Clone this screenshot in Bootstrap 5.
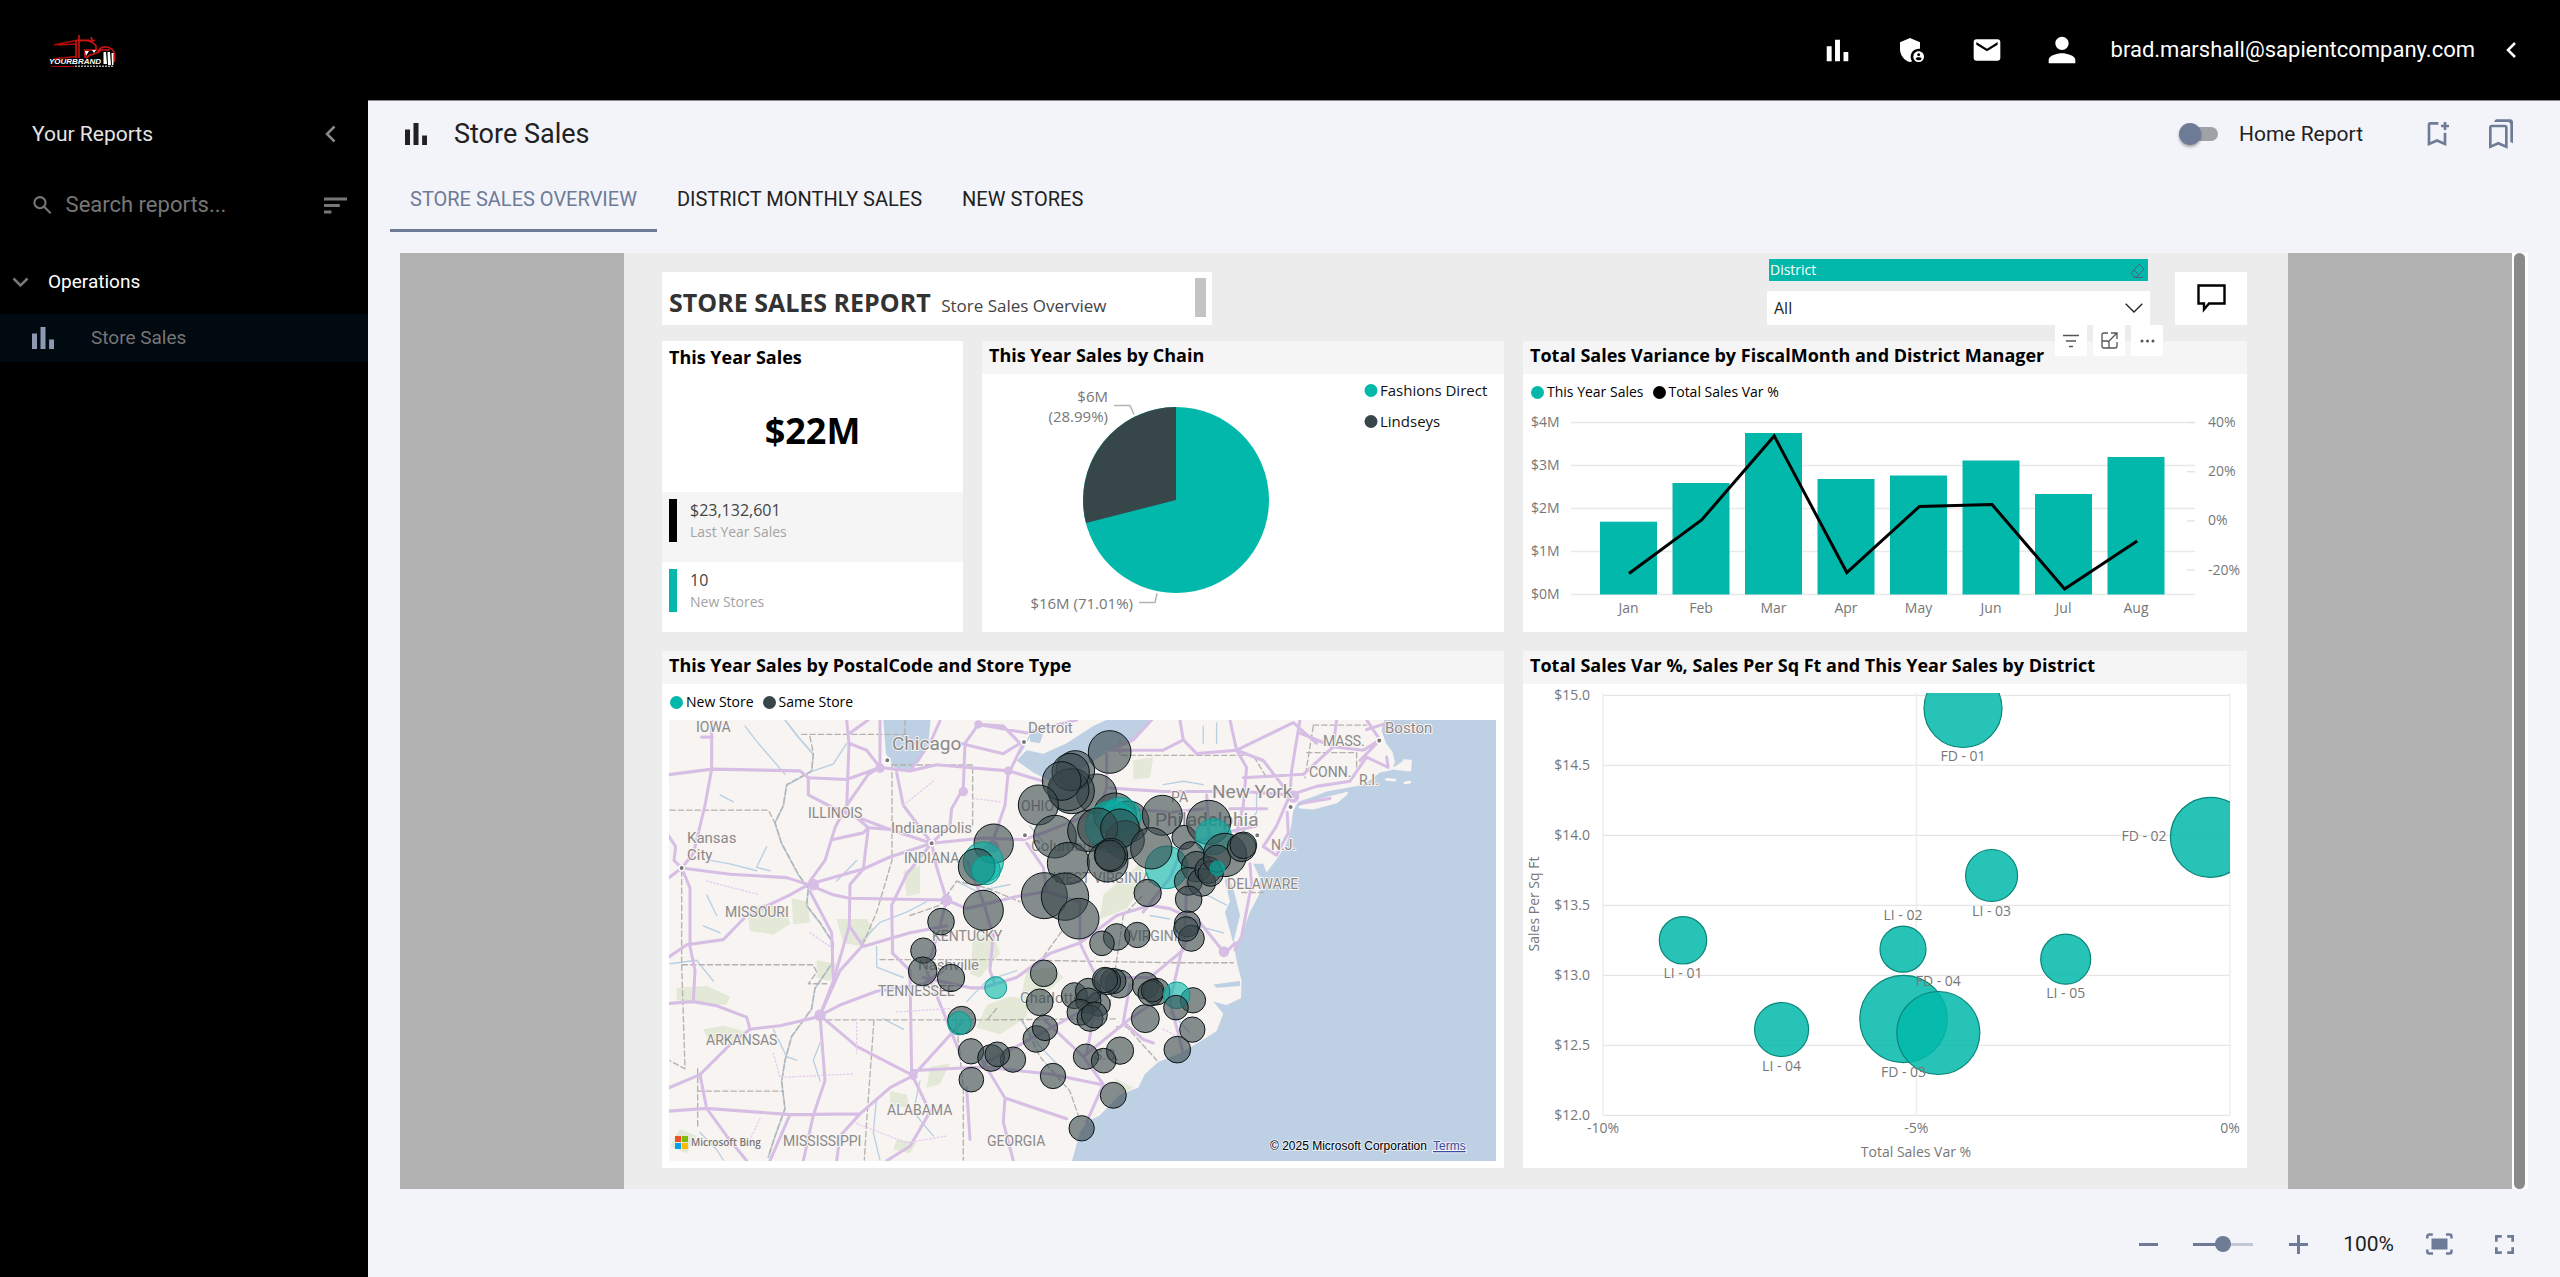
<!DOCTYPE html>
<html lang="en">
<head>
<meta charset="utf-8">
<meta name="viewport" content="width=device-width, initial-scale=1">
<title>Store Sales</title>
<link href="https://cdn.jsdelivr.net/npm/bootstrap@5.3.0/dist/css/bootstrap.min.css" rel="stylesheet">
<style>
:root{--teal:#01b8aa;--slate:#374649;--accent:#6d7b97}
body{font-family:Roboto,sans-serif;font-size:21px;line-height:28px;background:#f3f4fa;color:#212121}
.app-root{min-height:100vh}
.top-bar{height:100px;background:#000;color:#fff;padding:0 31px 0 48px}
.plain-btn{background:none;border:0;padding:0;color:inherit;display:inline-flex;align-items:center;justify-content:center}
.top-btn{width:75px;height:75px}
.user-name{color:#fff;text-decoration:none;font-size:22px;margin:0 18px 0 11px}
.side-nav{width:368px;background:#000;color:#e4e4e4}
.side-head{height:67px;padding:0 32px}
.side-search{height:66px;margin-top:5px;padding:0 21px 0 33px;color:#767676}
.side-search input{background:none;border:0;color:#767676;min-width:0;padding:0 0 0 14px;outline:0;font-size:22px}
.side-search input::placeholder{color:#767676;opacity:1}
.side-group{height:64px;margin-top:12px;padding-left:12px;font-size:19px;color:#fff;gap:19px;text-align:left}
.side-item{height:48px;background:#010911;color:#767676;font-size:19px;text-decoration:none;padding-left:32px;gap:37px}
.main-col{border-top:1px solid #8b8b8b;min-width:0}
.title-row{height:66px;padding:0 43px 0 37px}
.page-title{font-size:27px;font-weight:400;margin:0 0 0 27px}
.home-switch{padding:0;min-height:0;gap:21px}
.home-switch .form-check-input{float:none;appearance:none;margin:0;width:32px;height:14px;border:0;border-radius:7px;background:#a1a2a5;position:relative}
.home-switch .form-check-input::before{content:"";position:absolute;left:-7px;top:-4px;width:22px;height:22px;border-radius:50%;background:var(--accent);box-shadow:0 2px 3px #0005}
.view-tabs{height:65px;margin-bottom:21px;padding-left:22px}
.view-tabs .nav-link{color:#212121;font-size:20px;line-height:28px;padding:18px 20px 16px;border-bottom:3px solid transparent;text-transform:uppercase}
.view-tabs .nav-link.active{color:var(--accent);border-color:var(--accent)}
.stage-row{padding:0 32px;min-height:936px}
.stage{background:#b2b2b2}
.scroll-rail{width:16px;background:#fff;padding:0 3px 0 2px}
.scroll-knob{background:#8a8a8a;border-radius:6px}
.report-page{background:#ececec;aspect-ratio:16/9;height:936px;padding:0 41px 21px 38px;font-family:"Open Sans","Noto Sans",sans-serif;color:#000}
.report-top{height:88px}
.report-title{margin-top:19px;height:53px;width:550px;background:#fff;padding:6px 6px 8px 7px;color:#333}
.report-title h2{font-size:25px;line-height:34px;font-weight:700;margin:0;padding-top:7px}
.report-title h2 span{font-size:17px;font-weight:400;color:#444;margin-left:4px}
.title-scroll{width:11px;background:#c4c4c4}
.slicer{width:383px;margin:6px 25px 0 auto}
.slicer-label{background:var(--teal);color:#fff;font-size:14px;line-height:22px;margin:0 2px 10px;padding:0 3px 0 1px}
.slicer select{height:34px;background-color:#fff;border:0;border-radius:0;font-size:16px;line-height:22px;padding:6px 40px 6px 7px;color:#222;background-size:18px 10px;background-position:right 7px center;background-image:url("data:image/svg+xml,%3Csvg xmlns='http://www.w3.org/2000/svg' viewBox='0 0 18 10'%3E%3Cpath d='M.7.7 9 9 17.300.7' fill='none' stroke='%23222' stroke-width='1.300'/%3E%3C/svg%3E")}
.comment-btn{width:72px;height:53px;margin-top:19px;background:#fff}
.report-grid{display:grid;grid-template-columns:301fr 522fr 724fr;grid-template-rows:291fr 517fr;gap:19px;min-height:0}
.tile{background:#fff;min-width:0;min-height:0;position:relative}
.tile-title{background:#f5f5f5;font-size:18px;line-height:24px;font-weight:700;margin:0;padding:2px 7px 7px;white-space:nowrap;flex:none}
.wide-tile{grid-column:span 2}
.tile svg.plot{display:block;width:100%;flex:1 1 0;min-height:0}
.plot text{fill:#777;font-size:14px}
.plot .lab{font-size:15px}
.keys{font-size:14px;line-height:20px;gap:9px}
.keys i{display:inline-block;width:13px;height:13px;border-radius:50%;vertical-align:-2px;margin-right:3px}
.kpi-row{height:70px;padding:7px;gap:13px}
.kpi-row .swatch{width:8px;height:43px}
.kpi-row b{display:block;font-size:16px;line-height:23px;font-weight:400;color:#444}
.kpi-row small{display:block;font-size:14px;line-height:20px;color:#a3a3a3}
.kpi-big{font-size:36px;font-weight:700;line-height:48px;padding-bottom:6px}
.hover-tools{position:absolute;top:-16px;right:84px;gap:6px}
.hover-tools button{width:32px;height:31px;background:#fff;color:#555}
.map-box text{font-family:Roboto,sans-serif;fill:#8b8989;font-size:14px;paint-order:stroke;stroke:#f7f4f2;stroke-width:2px}
.map-box .m15{font-size:15px}.map-box .m19{font-size:19px}
.map-box .cap{font-family:"Liberation Sans",sans-serif;font-size:12px;fill:#000;stroke:#ffffff99}
.map-box a text.cap{fill:#3a4ea0;text-decoration:underline}
.map-box .bing{font-family:"Open Sans",sans-serif;font-size:10px;font-weight:600;fill:#777}
.foot-bar{height:88px;padding:22px 36px 0 0;gap:25px;color:var(--accent)}
.foot-bar button{width:40px;height:40px}
.foot-bar output{color:#212121}
.zoom-range{width:60px;height:16px;appearance:none;background:linear-gradient(90deg,#6d7b97 50%,#c3c8d5 50%) center/100% 3px no-repeat;margin:0;padding:0}
.zoom-range::-webkit-slider-thumb{appearance:none;width:16px;height:16px;border-radius:50%;background:var(--accent)}
</style>
</head>
<body>
<div class="app-root d-flex flex-column">
<header class="top-bar d-flex align-items-center">
  <a href="#" class="me-auto d-flex" aria-label="Home">
    <svg width="68" height="34" viewBox="0 0 68 34">
      <path d="M6 12 30 7 47 7.500M5 26 28 23.500M10 12l18-1" fill="none" stroke="#b00c08" stroke-width="1.400"/>
      <path d="M28 7.500V25M31 2v23M43 4l2 5M31 8q12-2 17 5v4H37v8M38 25l4-3 7-2q3-7 10-6 6 1 7.500 7v8M50 20l3-3h9" fill="none" stroke="#d01510" stroke-width="1.600"/>
      <path d="M37 18h4l-3 5zM44 17h4l-2 3zM55.500 19h2.500l1 12h-3.500zM59.500 19h2.500l1 13h-3zM63.500 20h2v12H64z" fill="#fff"/>
      <text x="1" y="31" font-family="Liberation Sans" font-size="8" font-weight="700" font-style="italic" fill="#fff">YOURBRAND</text>
      <path d="M3 33h23v1H3z" fill="#b00"/><path d="M27 33.300h38" stroke="#aaa" stroke-width="1.400" stroke-dasharray="2 1"/>
    </svg>
  </a>
  <button class="plain-btn top-btn" aria-label="Reports"><svg width="37" height="37" viewBox="0 0 24 24" fill="currentColor"><path d="M5 9.200h3.200V19H5zM10.400 5h3.200v14h-3.200zM15.900 13H19v6h-3.100z"/></svg></button>
  <button class="plain-btn top-btn" aria-label="Admin"><svg width="32" height="32" viewBox="0 0 24 24" fill="currentColor"><path d="M17 11c.34 0 .67.040 1 .090V6.270L10.500 3 3 6.270v4.910c0 4.540 3.200 8.790 7.500 9.820.55-.13 1.080-.32 1.600-.55-.69-.98-1.100-2.170-1.100-3.450 0-3.310 2.690-6 6-6z"/><path d="M17 13c-2.210 0-4 1.790-4 4s1.790 4 4 4 4-1.790 4-4-1.790-4-4-4zm0 1.380c.62 0 1.120.51 1.120 1.120s-.51 1.120-1.120 1.120-1.120-.51-1.120-1.120.5-1.120 1.120-1.120zm0 5.370c-.93 0-1.740-.46-2.240-1.170.05-.72 1.510-1.080 2.240-1.080s2.190.36 2.240 1.080c-.5.710-1.310 1.170-2.240 1.170z"/></svg></button>
  <button class="plain-btn top-btn" aria-label="Mail"><svg width="32" height="32" viewBox="0 0 24 24" fill="currentColor"><path d="M20 4H4c-1.100 0-2 .9-2 2v12c0 1.100.9 2 2 2h16c1.100 0 2-.9 2-2V6c0-1.100-.9-2-2-2zm0 4-8 5-8-5V6l8 5 8-5v2z"/></svg></button>
  <button class="plain-btn top-btn" aria-label="Account"><svg width="40" height="40" viewBox="0 0 24 24" fill="currentColor"><path d="M12 12c2.210 0 4-1.790 4-4s-1.790-4-4-4-4 1.790-4 4 1.790 4 4 4zm0 2c-2.670 0-8 1.340-8 4v2h16v-2c0-2.660-5.330-4-8-4z"/></svg></button>
  <a href="#" class="user-name">brad.marshall@sapientcompany.com</a>
  <button class="plain-btn" aria-label="Collapse header"><svg width="36" height="24" viewBox="0 0 36 24" fill="none" stroke="currentColor" stroke-width="2.500"><path d="M22 5l-7 7 7 7"/></svg></button>
</header>
<div class="d-flex flex-fill">
  <nav class="side-nav flex-shrink-0">
    <div class="side-head d-flex align-items-center justify-content-between"><span>Your Reports</span>
      <button class="plain-btn" style="color:#888" aria-label="Collapse"><svg width="11" height="18" viewBox="0 0 11 18" fill="none" stroke="currentColor" stroke-width="2.500"><path d="M9.500 1.500 2 9l7.500 7.500"/></svg></button></div>
    <label class="side-search d-flex align-items-center">
      <svg width="20" height="20" viewBox="0 0 20 20" fill="none" stroke="currentColor" stroke-width="2.300"><circle cx="7.500" cy="7.500" r="6"/><path d="m12 12 7 7"/></svg>
      <input type="text" class="flex-fill" placeholder="Search reports..." aria-label="Search reports">
      <svg width="25" height="17" viewBox="0 0 25 17" fill="currentColor"><path d="M0 0h25v3H0zM0 7h17v3H0zM0 14h8v3H0z"/></svg>
    </label>
    <button class="plain-btn side-group w-100 justify-content-start"><svg width="17" height="11" viewBox="0 0 17 11" fill="none" stroke="#777" stroke-width="2.500"><path d="m1.500 1.500 7 7 7-7"/></svg>Operations</button>
    <a href="#" class="side-item d-flex align-items-center"><svg width="22" height="22" viewBox="0 0 14 14" fill="#8d99b3"><path d="M0 4.200h3.200V14H0zM5.400 0h3.200v14H5.400zM10.900 8H14v6h-3.100z"/></svg>Store Sales</a>
  </nav>
  <main class="main-col flex-fill d-flex flex-column">
    <div class="title-row d-flex align-items-center">
      <svg width="22" height="22" viewBox="0 0 14 14" fill="#212121"><path d="M0 4.200h3.200V14H0zM5.400 0h3.200v14H5.400zM10.900 8H14v6h-3.100z"/></svg>
      <h1 class="page-title me-auto">Store Sales</h1>
      <div class="form-check form-switch home-switch d-flex align-items-center mb-0"><input class="form-check-input" type="checkbox" role="switch" id="homeRep"><label for="homeRep">Home Report</label></div>
      <button class="plain-btn" style="margin-left:58px;color:#6d7b97" aria-label="Add bookmark"><svg width="32" height="32" viewBox="0 0 24 24" fill="currentColor"><path d="M17 11v6.970l-5-2.140-5 2.140V5h6V3H7a2 2 0 0 0-2 2v16l7-3 7 3V11zm4-4h-2v2h-2V7h-2V5h2V3h2v2h2z"/></svg></button>
      <button class="plain-btn" style="margin-left:32px;color:#6d7b97" aria-label="Bookmarks"><svg width="32" height="32" viewBox="0 0 24 24" fill="currentColor"><path d="M15 7v12.970l-4.210-1.810-.79-.34-.79.34L5 19.970V7zm4-6H8.990C7.890 1 7 1.900 7 3h10c1.100 0 2 .9 2 2v13l2 1V3c0-1.100-.9-2-2-2zm-4 4H5c-1.100 0-2 .9-2 2v16l7-3 7 3V7c0-1.100-.9-2-2-2z"/></svg></button>
    </div>
    <ul class="nav view-tabs flex-nowrap">
      <li class="nav-item"><a class="nav-link active" href="#">Store Sales Overview</a></li>
      <li class="nav-item"><a class="nav-link" href="#">District Monthly Sales</a></li>
      <li class="nav-item"><a class="nav-link" href="#">New Stores</a></li>
    </ul>
    <div class="stage-row flex-fill d-flex">
      <div class="stage flex-fill d-flex justify-content-center">
        <div class="report-page d-flex flex-column">
          <div class="report-top d-flex align-items-start">
            <div class="report-title d-flex justify-content-between"><h2>STORE SALES REPORT <span>Store Sales Overview</span></h2><div class="title-scroll"></div></div>
            <div class="slicer">
              <label for="district" class="slicer-label d-flex justify-content-between align-items-center">District
                <svg width="15" height="15" viewBox="0 0 15 15" fill="none" stroke="#467" stroke-width="1"><path d="M9 1l5 5-7 8H4L1 10.500zM4 7l5 5M4 14.500h9"/></svg></label>
              <select id="district" class="form-select"><option>All</option></select>
            </div>
            <button class="plain-btn comment-btn" aria-label="Comments"><svg width="29" height="29" viewBox="0 0 29 29" fill="none" stroke="#000" stroke-width="2.400"><path d="M1.500 1.500h26v18H12l-5 6v-6H1.500z"/></svg></button>
          </div>
          <div class="report-grid flex-fill">
            <section class="tile d-flex flex-column">
              <h3 class="tile-title bg-white pt-1">This Year Sales</h3>
              <div class="kpi-big flex-fill d-flex align-items-center justify-content-center">$22M</div>
              <div class="kpi-row d-flex" style="background:#f5f5f5"><div class="swatch" style="background:#000"></div><div><b>$23,132,601</b><small>Last Year Sales</small></div></div>
              <div class="kpi-row d-flex"><div class="swatch" style="background:#01b8aa"></div><div><b>10</b><small>New Stores</small></div></div>
            </section>
            <section class="tile d-flex flex-column">
              <h3 class="tile-title">This Year Sales by Chain</h3>
              <svg class="plot" viewBox="982 374 522 258">
                <circle cx="1176" cy="500" r="93" fill="#01b8aa"/>
                <path d="M1176 500V407A93 93 0 0 0 1086 523z" fill="#374649"/>
                <path d="M1114 405.500h16l4 9M1139 602.500h16l2-9" fill="none" stroke="#b3b3b3" stroke-width="1.500"/>
                <text class="lab" x="1108" y="402" text-anchor="end">$6M</text><text class="lab" x="1108" y="422" text-anchor="end">(28.99%)</text>
                <text class="lab" x="1133" y="609" text-anchor="end">$16M (71.01%)</text>
                <circle cx="1371" cy="390.500" r="6.500" fill="#01b8aa"/><circle cx="1371" cy="421.500" r="6.500" fill="#374649"/>
                <text class="lab" x="1380" y="396" style="fill:#111">Fashions Direct</text><text class="lab" x="1380" y="427" style="fill:#111">Lindseys</text>
              </svg>
            </section>
            <section class="tile d-flex flex-column">
              <h3 class="tile-title">Total Sales Variance by FiscalMonth and District Manager</h3>
              <div class="hover-tools d-flex">
                <button class="plain-btn" aria-label="Filters"><svg width="16" height="14" viewBox="0 0 16 14" stroke="currentColor" stroke-width="1.300"><path d="M0 1.500h16M3 7h10M6 12.500h4"/></svg></button>
                <button class="plain-btn" aria-label="Focus mode"><svg width="17" height="17" viewBox="0 0 17 17" fill="none" stroke="currentColor" stroke-width="1.300"><path d="M7 1H3a2 2 0 0 0-2 2v11a2 2 0 0 0 2 2h11a2 2 0 0 0 2-2v-4M1 9h5a2 2 0 0 1 2 2v5M10 1h6v6M16 1 8 9"/></svg></button>
                <button class="plain-btn" aria-label="More"><svg width="15" height="4" viewBox="0 0 15 4" fill="currentColor"><circle cx="2" cy="2" r="1.500"/><circle cx="7.500" cy="2" r="1.500"/><circle cx="13" cy="2" r="1.500"/></svg></button>
              </div>
              <div class="keys d-flex px-2 pt-2"><span><i style="background:#01b8aa"></i>This Year Sales</span><span><i style="background:#000"></i>Total Sales Var %</span></div>
              <svg class="plot" id="barPlot" viewBox="1523 402 724 230"></svg>
            </section>
            <section class="tile wide-tile d-flex flex-column">
              <h3 class="tile-title">This Year Sales by PostalCode and Store Type</h3>
              <div class="keys d-flex px-2 pt-2 pb-2"><span><i style="background:#01b8aa"></i>New Store</span><span><i style="background:#374649"></i>Same Store</span></div>
              <div class="map-box flex-fill d-flex" style="padding:0 8px 7px 7px;min-height:0">
              <svg class="plot" viewBox="669 720 827 441" preserveAspectRatio="none">
                <rect x="669" y="720" width="827" height="441" fill="#f7f4f1"/>
                <g transform="translate(650 640) scale(.3333 .3444)" stroke-linejoin="round" stroke-linecap="round" fill="none">
                  <g fill="#e3e9d6"><path d="M290 780l60-15 60 20 10 40-50 30-70-10zM425 750l50 10 5 60-50 5zM560 810h90l20 30-30 50-60-10zM80 1010l90-5 70 30-10 25-90-5-60-10zM160 1130l60-10 60 15-10 30-90 5zM1010 1060l70-25 60 10-10 50-80 50-70-20zM1130 960l80-10 30 30-70 60-60 10zM970 860l60-10 20 60-60 70-30-10zM760 670l50-15v80l-40 10zM840 1240l60-10-30 60-40 10zM720 1310l50 10 10 40-60-10zM1360 740l110-90 20 40-60 90-80 30zM1450 350l60-10-10 60-50 5zM500 930l60 10-20 50-40-10zM90 1420l50 20-30 50-50-20zM1390 1270l60 30-30 15zM740 1450l60 10-20 30-50-10z"/></g>
                  <g fill="#bed0e4"><path d="M700 232H842L835 300 810 350 780 380 735 372 708 330zM1100 350 1130 320 1180 330 1250 300 1330 250 1370 232H1505L1450 290 1380 320 1300 370 1200 410 1150 385zM1140 265l40 5-10 30-30-5z"/>
                  <path d="M2203 232 2195 262 2208 300 2228 325 2235 355 2225 378 2190 385 2170 400 2140 420 2090 430 2030 440 1990 455 1945 470 1930 495 1922 550 1910 590 1885 630 1850 675 1840 650 1810 650 1805 640 1830 690V735L1800 790 1770 870 1750 880 1762 940 1775 990 1773 1040 1730 1060 1690 1050 1720 1085 1700 1135 1660 1160 1625 1180 1590 1200 1525 1225 1485 1260 1465 1300 1410 1320 1350 1380 1310 1400 1290 1430 1270 1500 1265 1514H2540V232zM1725 700l15 60-15 30 25 90 20-80-15-60-20-60zM1650 760l80 70M1690 1000l80-10v15l-70 5z"/></g>
                  <path d="M2228 372 2280 378 2282 352 2262 350M1950 485 2020 462 2090 445 2060 470 1990 488zM2210 405l25 2M2265 415l15-2" stroke="#f7f4f1" stroke-width="8" fill="#f7f4f1"/>
                  <g stroke="#b9d0e4" stroke-width="4"><path d="M405 232l40 50 45 50-5 50-75 40-10 60-25 50 20 60 50 90 30 40-5 50 40 50 40 60-5 60-50 70-10 60-60 80-20 70-10 60 10 80-30 80-20 60" stroke-width="5"/><path d="M285 250l40 50 80 90M590 300l-40 60-60 20M210 450l40 20M170 740l30 60M160 830l50 20M350 600l-30 60 40 10M60 940l80-10 50 60M180 640l60 10 80 20M560 700l60-60M630 880l60-60 80-30 60-30M680 890v60l80 30M920 700l60 30 100-20M1190 600l-50-60M370 1130l40 80 30 10M510 1170l-20 50 20 60M700 1100l60 30M680 1330l-10 100 20 80M810 1280l-20 90 60 70M1110 1100l60 80 60 60M1150 260l-40 70M150 1430l50 50 20 30M950 1050l60-60 90-30M1660 250v50M1700 240v60M1670 740l60 30M1640 830l80 20M1500 800l60 10M1560 1080l60 60M1540 420l60-10 60 10M1820 440v60l-50 70"/></g>
                  <path d="M60 494H355L380 540M95 670V943H490L500 965 475 998H530M726 360V640L680 790 640 880M726 363H968V540M455 274H770M765 232V274M690 928H1040L1560 937H1750M530 1103H1010L1400 1100M1400 1123H1430L1520 1220M95 943 105 1245 60 1222M143 1245V1415M143 1310H400M672 1103 650 1400 643 1510M918 1103 940 1300V1510M1115 1100 1170 1210 1260 1310 1285 1380M1380 1060 1420 800 1480 740M1415 335H1810L1850 400M1990 247H2150M1970 327H2120V380M1990 250 1965 400M1775 733H1840M1410 290V330M1040 1070 1010 1105M780 800l90-30 50-70 90 20 100 40M1100 980l80-60 60-80M480 280l10 50-5 50-75 40-10 60-25 50 20 60 50 90 30 40-5 50 40 50 40 60-5 60-50 70-10 60-60 80-20 70-10 60 10 80-30 80-20 60" stroke="#b5b2ae" stroke-width="4" stroke-dasharray="16 9"/>
                  <g stroke="#d7bee5" stroke-width="9">
                  <path d="M57 391 185 375 450 380 475 400 590 405 690 370 780 380 860 362 1075 380 1180 410"/><path d="M185 232V375L165 480 130 620 95 662 57 690M155 282H187"/><path d="M57 570l20 30-5 40 23 22L240 680 410 690 475 710 640 665 720 630 845 590 1000 575 1120 580 1180 560 1360 490"/><path d="M690 370 655 390 590 480 555 545 525 640 480 700 490 710M590 232 597 300 590 490 655 545 640 665 600 710 598 830 550 990 510 1090M597 300 650 320 690 370M690 232V370M600 270 655 232"/><path d="M475 400V450L555 490 720 550 845 590M740 385 760 480 845 590M845 590 770 680 725 770 728 910M845 590 860 660 890 755 950 780 1100 745 1190 730"/><path d="M545 580 640 560 655 545 720 550M845 590 900 540 905 490 940 430 945 300 985 245 1060 250 1110 300M870 235 840 300 780 380M1075 380 1065 480 1030 580 1000 610M1120 300 1080 380M1110 300 1060 330 930 300M985 245 1130 270 1280 232"/><path d="M475 710 420 740 290 800 220 870 110 885 57 920M95 662 120 720V890L135 960 130 1050 57 1055M130 1050 200 1062 290 1095 300 1130 390 1120 500 1095"/><path d="M300 1130 235 1180 150 1262 57 1300M150 1262 170 1360 230 1440 290 1512M57 1368 170 1360 420 1378 630 1376 720 1300 790 1265M510 1090 525 1280 490 1380 460 1512M420 1378 360 1512M630 1376 570 1440 560 1512M510 1090 620 1180 790 1265M510 1090 570 1060 680 1020 820 1000 880 960"/><path d="M475 710 550 740 598 750 890 755M480 730 545 850 550 990M598 830 640 890 780 850 890 830M728 910 780 960 785 1260 840 1370 780 1470 710 1512M640 885 570 960 510 1090M890 755 870 830 830 960 880 1080 930 1200M820 980 960 1010 1000 1010 1100 980 1200 910 1290 880M1030 850 1020 960 1035 1000"/><path d="M950 640 1000 760 1030 860M790 1250 1000 1240 1200 1260 1350 1290M935 1110 790 1265M990 1210 1065 1330 1060 1400 1090 1512M1065 1330 1250 1390M950 1300 960 1450M1000 1230 1120 1170 1290 1080 1360 980 1500 980 1600 900 1620 840M1180 1100 1300 1210 1360 1290 1310 1400M1300 1210 1440 1100 1500 1060M1440 1000 1420 1110 1480 1160 1510 1170"/><path d="M1290 880 1350 1000 1310 1200M1290 880 1400 800 1500 770 1560 780 1650 820 1725 910 1755 880M1190 730 1290 760 1290 880M1610 700 1605 860 1560 1050 1600 1200M1480 790 1560 690 1600 600M1130 590 1180 660 1190 730"/><path d="M1505 232 1450 290 1380 320 1540 320 1600 290 1590 232M1600 290 1640 330 1760 320 1930 240 2000 300M1740 232 1760 320 1790 370 1780 480 1760 560M1760 320 1840 350 1880 400 1920 450M1950 232 1925 380 1920 450 1880 540 1840 600 1880 625 1915 560 1912 500M1380 430 1540 440 1700 440 1780 440 1920 450M1780 400 1960 390 2050 310 2140 320 2190 290M1920 450 2000 425 2100 410 2150 340 2215 370 2210 340M1740 490 1850 490M1600 600 1720 560 1820 540M1670 450 1680 620M1660 490 1560 500 1440 490M1950 270 2050 310 2060 232M2150 232 2190 290 2130 350M1950 475 2040 460M2150 260 2200 245M1800 650l5 60-30 150-20 40M1370 330V430L1330 540"/></g>
                  <path d="M740 1080 900 1070 930 1110M620 1100V1200M170 700l160 40M370 1200l20 70 220-10M480 850l60 40M760 480l90-70M1540 1130l80 40M330 1390l-30 60M610 1400l160 60 120-20M970 460l80 10" stroke="#e6cdf0" stroke-width="4" stroke-dasharray="4 7"/>
                  <g fill="#d7bee5"><circle cx="490" cy="710" r="17"/><circle cx="890" cy="755" r="17"/><circle cx="1030" cy="600" r="18"/><circle cx="790" cy="1265" r="13"/><circle cx="510" cy="1090" r="17"/><circle cx="1722" cy="905" r="16"/><circle cx="985" cy="245" r="12"/><circle cx="1930" cy="455" r="18"/><circle cx="1075" cy="380" r="13"/><circle cx="690" cy="372" r="14"/><circle cx="940" cy="440" r="14"/></g>
                  <g fill="#777" stroke="#fff" stroke-width="4"><circle cx="712" cy="349" r="8"/><circle cx="1122" cy="296" r="8"/><circle cx="845" cy="590" r="8"/><circle cx="1125" cy="567" r="8"/><circle cx="95" cy="662" r="8"/><circle cx="1922" cy="485" r="8"/><circle cx="2188" cy="292" r="8"/><circle cx="1822" cy="567" r="8"/></g>
                </g>
                <text x="696" y="732">IOWA</text><text class="m19" x="892" y="750">Chicago</text><text class="m15" x="1028" y="733">Detroit</text><text class="m15" x="687" y="843">Kansas</text><text class="m15" x="687" y="860">City</text><text x="808" y="818">ILLINOIS</text><text class="m15" x="891" y="833">Indianapolis</text><text x="904" y="863">INDIANA</text><text x="725" y="917">MISSOURI</text><text x="932" y="941">KENTUCKY</text><text class="m15" x="918" y="970">Nashville</text><text x="878" y="996">TENNESSEE</text><text x="706" y="1045">ARKANSAS</text><text x="887" y="1115">ALABAMA</text><text x="783" y="1146">MISSISSIPPI</text><text x="987" y="1146">GEORGIA</text><text x="1021" y="811">OHIO</text><text class="m15" x="1031" y="851">Columbus</text><text class="m19" x="1212" y="798">New York</text><text class="m19" x="1155" y="826">Philadelphia</text><text x="1171" y="802">PA</text><text x="1323" y="746">MASS.</text><text x="1309" y="777">CONN.</text><text x="1359" y="785">R.I.</text><text class="m15" x="1385" y="733">Boston</text><text x="1271" y="850">N.J.</text><text x="1227" y="889">DELAWARE</text><text x="1053" y="883">WEST VIRGINIA</text><text x="1129" y="941">VIRGINIA</text><text class="m15" x="1020" y="1003">Charlotte</text><text x="1094" y="1060">S.C.</text>
                <g id="storePins" transform="translate(1000 720) scale(.3333)" stroke="#0a1417" stroke-width="3"></g>
                <path d="M675 1136h6v6h-6z" fill="#f25022"/><path d="M682 1136h6v6h-6z" fill="#7fba00"/><path d="M675 1143h6v6h-6z" fill="#00a4ef"/><path d="M682 1143h6v6h-6z" fill="#ffb900"/>
                <text class="bing" x="691" y="1146">Microsoft Bing</text>
                <text class="cap" x="1270" y="1150">© 2025 Microsoft Corporation</text><a href="#"><text class="cap" x="1433" y="1150">Terms</text></a>
              </svg></div>
            </section>
            <section class="tile d-flex flex-column">
              <h3 class="tile-title">Total Sales Var %, Sales Per Sq Ft and This Year Sales by District</h3>
              <svg class="plot" id="scatterPlot" viewBox="1523 684 724 484"></svg>
            </section>
          </div>
        </div>
      </div>
      <div class="scroll-rail d-flex"><div class="scroll-knob flex-fill"></div></div>
    </div>
    <footer class="foot-bar d-flex align-items-center justify-content-end pb-0">
      <button class="plain-btn" aria-label="Zoom out"><svg width="19" height="19" viewBox="0 0 19 19"><path d="M0 8h19v3H0z" fill="currentColor"/></svg></button>
      <input type="range" class="zoom-range" min="0" max="200" value="100" aria-label="Zoom">
      <button class="plain-btn" aria-label="Zoom in"><svg width="19" height="19" viewBox="0 0 19 19"><path d="M0 8h19v3H0zM8 0h3v19H8z" fill="currentColor"/></svg></button>
      <output>100%</output>
      <button class="plain-btn" aria-label="Fit to page"><svg width="27" height="22" viewBox="0 0 27 22" fill="none" stroke="currentColor" stroke-width="2.500"><path d="M1.300 5.500v-2a2 2 0 0 1 2-2h3.500M20 1.500h3.500a2 2 0 0 1 2 2v2M25.500 16.500v2a2 2 0 0 1-2 2H20M7 20.500H3.300a2 2 0 0 1-2-2v-2"/><path d="M5.500 5.500h16v11h-16z" fill="currentColor" stroke="none"/></svg></button>
      <button class="plain-btn" aria-label="Full screen"><svg width="19" height="19" viewBox="0 0 14 14" fill="currentColor"><path d="M0 0h5v2H2v3H0zM9 0h5v5h-2V2H9zM0 9h2v3h3v2H0zM12 9h2v5H9v-2h3z"/></svg></button>
    </footer>
  </main>
</div>
</div>
<script src="https://cdn.jsdelivr.net/npm/bootstrap@5.3.0/dist/js/bootstrap.bundle.min.js"></script>
<script>
// Stores on the map: x, y, radius, kind (t = new store)
const stores=[[329,96,64],[290,222,60],[226,150,58],[215,213,68],[205,210,62],[212,156,56],[185,183,58],[115,255,60],[165,350,64],[265,333,62],[345,283,64],[385,305,62],[335,320,78,'t'],[362,292,60,'t'],[375,360,58],[293,324,60],[360,325,58],[205,430,63],[323,425,61],[333,405,50],[330,406,46],[487,286,60],[500,442,64,'t'],[454,385,62],[552,352,36],[626,307,66],[640,350,54,'t'],[675,405,65],[573,405,40],[590,440,46],[565,484,42],[605,487,42],[625,450,40],[632,461,38],[651,416,41],[725,382,43],[730,376,40],[652,445,22,'t'],[443,519,41],[566,538,40],[562,612,39],[574,655,39],[558,627,37],[133,527,69],[195,530,71],[236,596,61],[350,651,40],[306,670,37],[412,645,38],[131,760,40],[119,847,40],[109,957,40],[135,924,38],[39,1019,38],[223,827,39],[295,853,36],[265,814,39],[265,842,38],[240,877,39],[270,895,39],[283,885,39],[358,792,42],[340,783,38],[322,784,40],[315,780,38],[437,797,40],[470,815,40],[452,820,38],[458,812,34],[579,841,38],[530,826,40,'t'],[528,863,37],[436,896,42],[577,929,38],[532,989,40],[258,1010,38],[360,992,41],[311,1022,37],[340,1126,39],[159,1068,38],[245,1225,38],[-19,371,59],[-50,426,60,'t'],[-70,441,55],[-42,451,43,'t'],[-50,571,60],[-177,605,40],[-230,692,38],[-232,754,43],[-147,774,41],[-13,803,33,'t'],[-115,901,42],[-122,910,35,'t'],[-87,994,38],[-27,1014,40],[-8,1003,37],[-86,1079,37]];
storePins.innerHTML=stores.map(([x,y,r,k])=>`<circle cx="${x}" cy="${y}" r="${r}" fill="${k?'#01b8aa':'#374649'}" fill-opacity=".6"${k?' stroke="#0a9a8e"':''}/>`).join('');
// Sales by month
const months=[['Jan',521.7,573.5],['Feb',483,520],['Mar',433,436],['Apr',479,572.5],['May',475.5,506.5],['Jun',460.5,504.5],['Jul',494,589],['Aug',457,541]];
let b='';
for(let i=0;i<5;i++){const y=594.5-43*i;b+=`<path d="M1571 ${y}H2195" stroke="#e9e9e9" stroke-width="1.500"/><text x="1531" y="${y+4.5}">$${i}M</text>`}
['40%','20%','0%','-20%'].forEach((t,i)=>{const y=422.5+49.2*i;b+=`<path d="M2187 ${y}h8" stroke="#e4e4e4" stroke-width="1.500"/><text x="2208" y="${y+4.5}">${t}</text>`});
months.forEach(([m,t],i)=>{const x=1600+72.5*i;b+=`<rect x="${x}" y="${t}" width="57" height="${594.5-t}" fill="#01b8aa"/><text x="${x+28.5}" y="613" text-anchor="middle">${m}</text>`});
b+=`<polyline points="${months.map((m,i)=>(1629+72.6*i)+','+m[2]).join(' ')}" fill="none" stroke="#000" stroke-width="3"/>`;
barPlot.innerHTML=b;
// District bubbles: name, x, y, r, label x, label baseline
const d=[['FD - 01',1963,708.5,39,1963,761],['FD - 02',2210.4,837.3,40,2144,841],['LI - 03',1991.6,875.5,26,1991.6,916],['LI - 01',1683,940.3,23.7,1683,978],['LI - 02',1903,949.2,23,1903,920],['LI - 05',2065.7,959.2,25,2065.7,998],['LI - 04',1781.6,1029.5,27,1781.6,1071],['FD - 03',1903.5,1019,43.7,1903.5,1077],['FD - 04',1938.3,1033,41.5,1938.3,986]];
let s='<clipPath id="plotArea"><path d="M1603 693H2230V1116H1603z"/></clipPath>';
for(let i=0;i<7;i++){const y=695.4+70*i;s+=`<path d="M1603 ${y}H2230" stroke="#e6e6e6" stroke-width="1.300"/><text x="1590" y="${y+4.5}" text-anchor="end">$${(15-i/2).toFixed(1)}</text>`}
[['-10%',1603],['-5%',1916.4],['0%',2230]].forEach(([t,x])=>s+=`<path d="M${x} 693V1116" stroke="#ececec" stroke-width="1.300"/><text x="${x}" y="1133" text-anchor="middle">${t}</text>`);
s+='<text x="1916" y="1157" text-anchor="middle">Total Sales Var %</text><text transform="translate(1539 904) rotate(-90)" text-anchor="middle">Sales Per Sq Ft</text><g clip-path="url(#plotArea)" fill="#01b8aa" fill-opacity=".85" stroke="#078578" stroke-width="1.200">';
d.forEach(([n,x,y,r])=>s+=`<circle cx="${x}" cy="${y}" r="${r}"/>`);
s+='</g>';
d.forEach(([n,x,y,r,lx,ly])=>s+=`<text x="${lx}" y="${ly}" text-anchor="middle">${n}</text>`);
scatterPlot.innerHTML=s;
</script>
</body>
</html>
